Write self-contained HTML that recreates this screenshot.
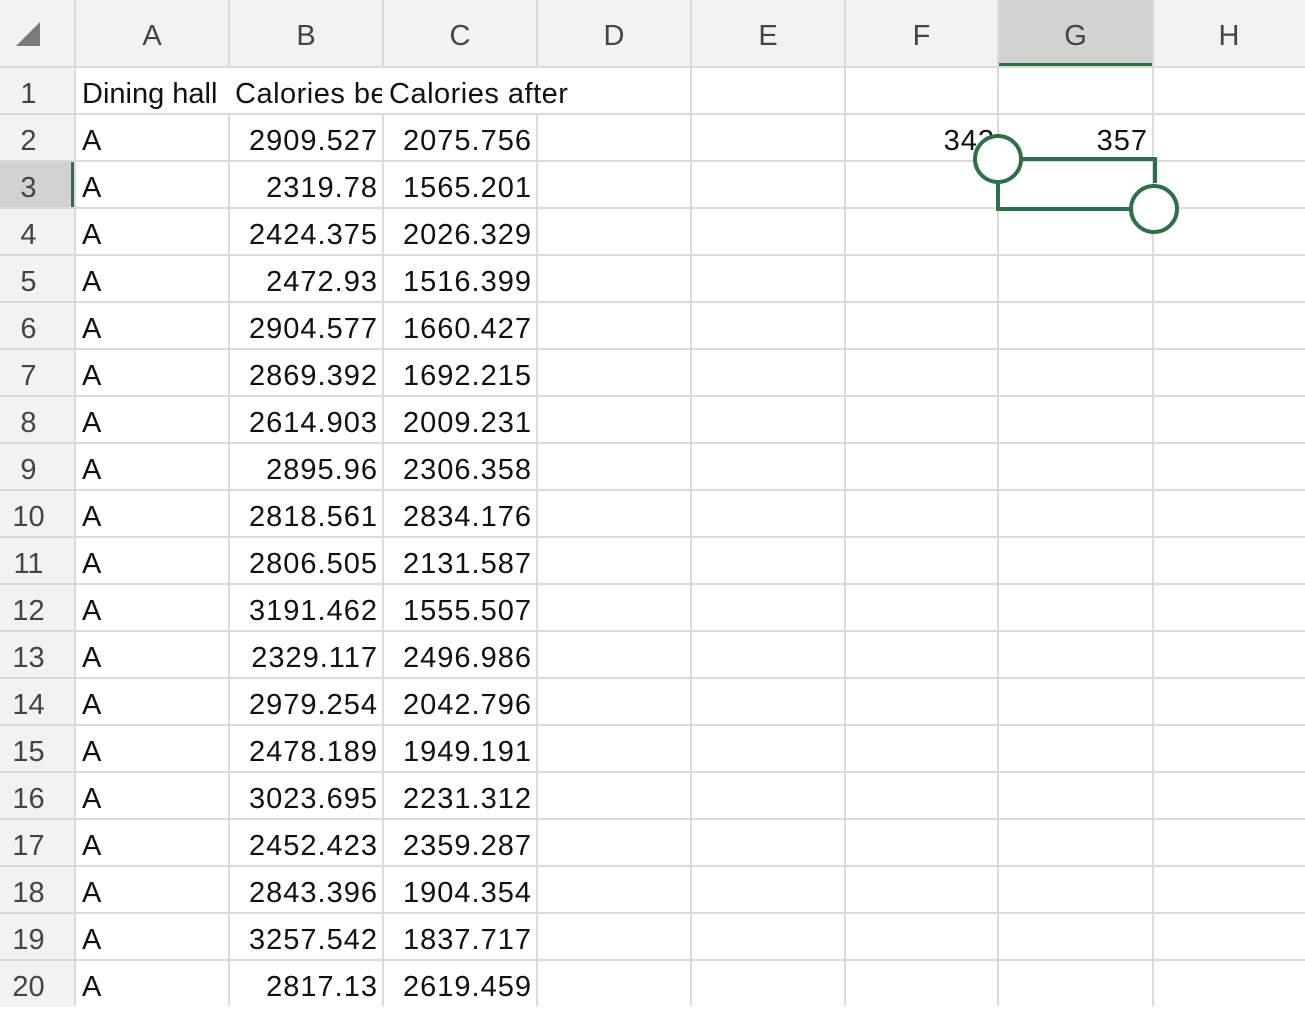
<!DOCTYPE html>
<html><head><meta charset="utf-8"><style>
*{margin:0;padding:0;box-sizing:border-box}
body{width:1305px;height:1006px;overflow:hidden;background:#fff;position:relative;font-family:"Liberation Sans",sans-serif;color:#111}
.vl{position:absolute;top:0;width:2px;height:1006px;background:#dadada}
.hl{position:absolute;left:0;height:2px;width:1305px;background:#dadada}
.hdr{position:absolute;top:0;height:67px;background:#f2f2f2;color:#444;font-size:29px;text-align:center;line-height:72px}
.rh{position:absolute;left:0;width:75px;background:#f2f2f2;color:#444;font-size:29px;text-align:center;padding-right:18px;line-height:54px;height:47px}
.c{position:absolute;font-size:29px;line-height:54px;height:47px;white-space:nowrap}
.l{left:82px}
.b{left:229px;width:149px;text-align:right;letter-spacing:1px}
.cc{left:383px;width:149px;text-align:right;letter-spacing:1px}
</style></head><body>
<div class="hdr" style="left:0;width:75px"></div>
<svg style="position:absolute;left:16px;top:22px" width="24" height="24"><polygon points="24,0 24,24 0,24" fill="#7a7a7a"/></svg>
<div class="hdr" style="left:75px;width:154px">A</div>
<div class="hdr" style="left:229px;width:154px">B</div>
<div class="hdr" style="left:383px;width:154px">C</div>
<div class="hdr" style="left:537px;width:154px">D</div>
<div class="hdr" style="left:691px;width:154px">E</div>
<div class="hdr" style="left:845px;width:153px">F</div>
<div class="hdr" style="left:998px;width:155px;background:#d2d2d2">G</div>
<div class="hdr" style="left:1153px;width:152px">H</div>
<div style="position:absolute;left:998px;top:63px;width:155px;height:4px;background:#2c7048"></div>

<div class="rh" style="top:67px">1</div>
<div class="rh" style="top:114px">2</div>
<div class="rh" style="top:161px;background:#d2d2d2">3</div>
<div class="rh" style="top:208px">4</div>
<div class="rh" style="top:255px">5</div>
<div class="rh" style="top:302px">6</div>
<div class="rh" style="top:349px">7</div>
<div class="rh" style="top:396px">8</div>
<div class="rh" style="top:443px">9</div>
<div class="rh" style="top:490px">10</div>
<div class="rh" style="top:537px">11</div>
<div class="rh" style="top:584px">12</div>
<div class="rh" style="top:631px">13</div>
<div class="rh" style="top:678px">14</div>
<div class="rh" style="top:725px">15</div>
<div class="rh" style="top:772px">16</div>
<div class="rh" style="top:819px">17</div>
<div class="rh" style="top:866px">18</div>
<div class="rh" style="top:913px">19</div>
<div class="rh" style="top:960px">20</div>
<div style="position:absolute;left:71px;top:161px;width:4px;height:47px;background:#2c7048"></div>

<div class="vl" style="left:74px"></div>
<div class="vl" style="left:228px;top:0"></div>
<div class="vl" style="left:382px"></div>
<div class="vl" style="left:536px"></div>
<div class="vl" style="left:690px"></div>
<div class="vl" style="left:844px"></div>
<div class="vl" style="left:997px"></div>
<div class="vl" style="left:1152px"></div>
<div class="hl" style="top:66px"></div>
<div class="hl" style="top:113px"></div>
<div class="hl" style="top:160px"></div>
<div class="hl" style="top:207px"></div>
<div class="hl" style="top:254px"></div>
<div class="hl" style="top:301px"></div>
<div class="hl" style="top:348px"></div>
<div class="hl" style="top:395px"></div>
<div class="hl" style="top:442px"></div>
<div class="hl" style="top:489px"></div>
<div class="hl" style="top:536px"></div>
<div class="hl" style="top:583px"></div>
<div class="hl" style="top:630px"></div>
<div class="hl" style="top:677px"></div>
<div class="hl" style="top:724px"></div>
<div class="hl" style="top:771px"></div>
<div class="hl" style="top:818px"></div>
<div class="hl" style="top:865px"></div>
<div class="hl" style="top:912px"></div>
<div class="hl" style="top:959px"></div>

<div style="position:absolute;left:76px;top:68px;width:614px;height:45px;background:#fff"></div>
<div class="c l" style="top:67px">Dining hall</div>
<div class="c" style="top:67px;left:235px;width:147px;overflow:hidden;letter-spacing:0.5px">Calories before</div>
<div class="c" style="top:67px;left:389px;letter-spacing:0.5px">Calories after</div>

<div class="c l" style="top:114px">A</div><div class="c b" style="top:114px">2909.527</div><div class="c cc" style="top:114px">2075.756</div>
<div class="c l" style="top:161px">A</div><div class="c b" style="top:161px">2319.78</div><div class="c cc" style="top:161px">1565.201</div>
<div class="c l" style="top:208px">A</div><div class="c b" style="top:208px">2424.375</div><div class="c cc" style="top:208px">2026.329</div>
<div class="c l" style="top:255px">A</div><div class="c b" style="top:255px">2472.93</div><div class="c cc" style="top:255px">1516.399</div>
<div class="c l" style="top:302px">A</div><div class="c b" style="top:302px">2904.577</div><div class="c cc" style="top:302px">1660.427</div>
<div class="c l" style="top:349px">A</div><div class="c b" style="top:349px">2869.392</div><div class="c cc" style="top:349px">1692.215</div>
<div class="c l" style="top:396px">A</div><div class="c b" style="top:396px">2614.903</div><div class="c cc" style="top:396px">2009.231</div>
<div class="c l" style="top:443px">A</div><div class="c b" style="top:443px">2895.96</div><div class="c cc" style="top:443px">2306.358</div>
<div class="c l" style="top:490px">A</div><div class="c b" style="top:490px">2818.561</div><div class="c cc" style="top:490px">2834.176</div>
<div class="c l" style="top:537px">A</div><div class="c b" style="top:537px">2806.505</div><div class="c cc" style="top:537px">2131.587</div>
<div class="c l" style="top:584px">A</div><div class="c b" style="top:584px">3191.462</div><div class="c cc" style="top:584px">1555.507</div>
<div class="c l" style="top:631px">A</div><div class="c b" style="top:631px">2329.117</div><div class="c cc" style="top:631px">2496.986</div>
<div class="c l" style="top:678px">A</div><div class="c b" style="top:678px">2979.254</div><div class="c cc" style="top:678px">2042.796</div>
<div class="c l" style="top:725px">A</div><div class="c b" style="top:725px">2478.189</div><div class="c cc" style="top:725px">1949.191</div>
<div class="c l" style="top:772px">A</div><div class="c b" style="top:772px">3023.695</div><div class="c cc" style="top:772px">2231.312</div>
<div class="c l" style="top:819px">A</div><div class="c b" style="top:819px">2452.423</div><div class="c cc" style="top:819px">2359.287</div>
<div class="c l" style="top:866px">A</div><div class="c b" style="top:866px">2843.396</div><div class="c cc" style="top:866px">1904.354</div>
<div class="c l" style="top:913px">A</div><div class="c b" style="top:913px">3257.542</div><div class="c cc" style="top:913px">1837.717</div>
<div class="c l" style="top:960px">A</div><div class="c b" style="top:960px">2817.13</div><div class="c cc" style="top:960px">2619.459</div>

<div class="c" style="top:114px;left:845px;width:150px;text-align:right;letter-spacing:1px">342</div>
<div class="c" style="top:114px;left:998px;width:150px;text-align:right;letter-spacing:1px">357</div>

<svg style="position:absolute;left:0;top:0" width="1305" height="1006">
<path d="M1021 159 H1155 V183 M998 182 V209 H1131" fill="none" stroke="#2c7048" stroke-width="4"/>
<circle cx="998" cy="159" r="23" fill="#fff" stroke="#2c7048" stroke-width="4"/>
<circle cx="1154" cy="209" r="23" fill="#fff" stroke="#2c7048" stroke-width="4"/>
</svg>
</body></html>
